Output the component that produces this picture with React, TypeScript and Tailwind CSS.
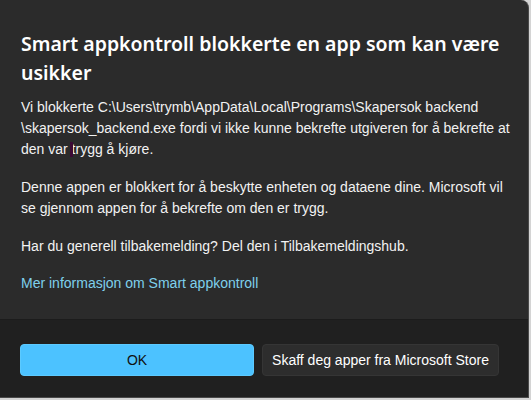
export default function App() {
  return (
    <div className="w-[531px] h-[400px] bg-[#d4d4d4] overflow-hidden" style={{ fontFamily: '"Liberation Sans", Arial, sans-serif' }}>
      <div className="w-[529px] h-[398px] bg-[#2b2b2b] rounded-tr-[8px] border-r border-b border-[#4a4a4a] flex flex-col overflow-hidden">
        <div className="flex-1 pl-[21px] pr-[18px] pt-[29px] text-white">
          <h1 className="font-['Noto_Sans',sans-serif] text-[19.5px] leading-[29px] font-semibold">
            Smart appkontroll blokkerte en app som kan være usikker
          </h1>
          <p className="mt-[10px] text-[14px] leading-[21px] text-[#f2f2f2]">
            Vi blokkerte C:\Users\trymb\AppData\Local\Programs\Skapersok backend \skapersok_backend.exe fordi vi ikke kunne bekrefte utgiveren for å bekrefte at den var{" "}
            <span className="relative">
              <span className="absolute left-[-2px] top-[1px] w-[3px] h-[15px] bg-[#3d0a35]" />
            </span>
            trygg å kjøre.
          </p>
          <p className="mt-[17px] text-[14px] leading-[21px] text-[#f2f2f2]">
            Denne appen er blokkert for å beskytte enheten og dataene dine. Microsoft vil se gjennom appen for å bekrefte om den er trygg.
          </p>
          <p className="mt-[17px] text-[14px] leading-[21px] text-[#f2f2f2]">
            Har du generell tilbakemelding? Del den i Tilbakemeldingshub.
          </p>
          <a className="block mt-[16px] text-[14px] leading-[21px] text-[#7fd0ec]">
            Mer informasjon om Smart appkontroll
          </a>
        </div>
        <div className="h-[78px] bg-[#202020] border-t border-[#1c1c1c] flex items-start gap-[8px] px-[20px] pt-[24px]">
          <button className="w-[234px] h-[32px] rounded-[4px] bg-[#4cc2ff] text-[14px] text-[#101010] border border-[#5ccaff]">
            OK
          </button>
          <button className="w-[237px] h-[32px] rounded-[4px] bg-[#2d2d2d] text-[14px] text-white border border-[#353535]">
            Skaff deg apper fra Microsoft Store
          </button>
        </div>
      </div>
    </div>
  );
}
